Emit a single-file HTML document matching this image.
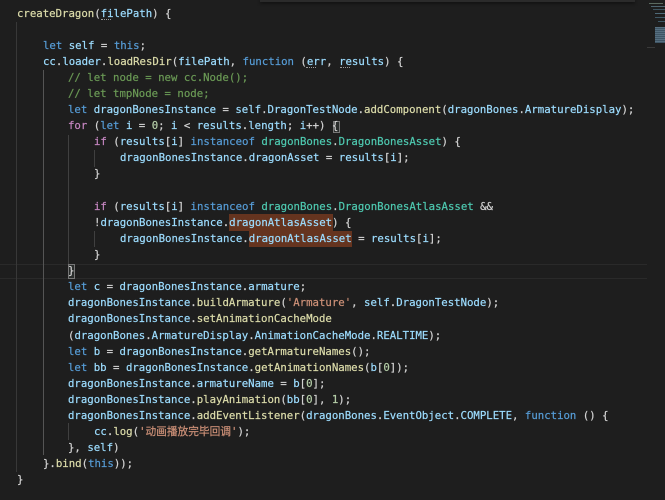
<!DOCTYPE html>
<html><head><meta charset="utf-8">
<style>
html,body{margin:0;padding:0;background:#1e1e1e;width:665px;height:500px;overflow:hidden}
#e{position:absolute;left:0;top:0;width:665px;height:500px;overflow:hidden;background:#1e1e1e;filter:blur(0.25px)}
#t{position:absolute;left:0;top:1px;width:665px;height:499px}
.l{position:absolute;white-space:pre;font-family:"DejaVu Sans Mono","Noto Sans CJK SC",monospace;font-size:10.7px;line-height:16px;height:16px;color:#d4d4d4;letter-spacing:0;-webkit-text-stroke:0.2px currentColor}
.b{position:absolute}
.k{color:#569cd6}.v{color:#9cdcfe}.f{color:#dcdcaa}.c{color:#6a9955}.p{color:#c586c0}.t{color:#4ec9b0}.s{color:#ce9178}.n{color:#b5cea8}
.g{position:absolute;width:1px;background:#404040}
.m{position:absolute;height:1px}
.d{position:absolute;width:10px;height:1px;border-bottom:1px dotted #9a9a9a;box-sizing:border-box}
</style></head><body>
<div id="e">
<div class="b" style="left:0;top:264px;width:647px;height:1px;background:#2a2a2a"></div>
<div class="b" style="left:0;top:278px;width:647px;height:1px;background:#2a2a2a"></div>

<div class="g" style="left:16px;top:22px;height:450px;background:#383838"></div>
<div class="g" style="left:43px;top:70px;height:385px;background:#555"></div>
<div class="g" style="left:68px;top:135px;height:130px"></div>
<div class="g" style="left:68px;top:423px;height:17px"></div>
<div class="g" style="left:94px;top:150px;height:17px"></div>
<div class="g" style="left:94px;top:231px;height:16px"></div>

<div class="b" style="left:229px;top:214px;width:104px;height:17px;background:#65341f"></div>
<div class="b" style="left:249px;top:231px;width:103px;height:16px;background:#65341f"></div>
<div class="b" style="left:333px;top:121px;width:7px;height:12px;border:1px solid #777;box-sizing:border-box;background:#2a2d2c"></div>
<div class="b" style="left:68px;top:264px;width:7px;height:15px;border:1px solid #777;box-sizing:border-box;background:#2a2d2c"></div>

<div id="t">
<div class="l" style="left:17px;top:5px"><span class="f">createDragon</span>(<span class="v">filePath</span>) {</div>
<div class="l" style="left:43px;top:37px"><span class="k">let</span> <span class="v">self</span> = <span class="k">this</span>;</div>
<div class="l" style="left:43px;top:53px"><span class="v">cc</span>.<span class="v">loader</span>.<span class="f">loadResDir</span>(<span class="v">filePath</span>, <span class="k">function</span> (<span class="v">err</span>, <span class="v">results</span>) {</div>
<div class="l" style="left:68px;top:69px"><span class="c">// let node = new cc.Node();</span></div>
<div class="l" style="left:68px;top:85px"><span class="c">// let tmpNode = node;</span></div>
<div class="l" style="left:68px;top:101px"><span class="k">let</span> <span class="v">dragonBonesInstance</span> = <span class="v">self</span>.<span class="v">DragonTestNode</span>.<span class="f">addComponent</span>(<span class="v">dragonBones</span>.<span class="v">ArmatureDisplay</span>);</div>
<div class="l" style="left:68px;top:117px"><span class="p">for</span> (<span class="k">let</span> <span class="v">i</span> = <span class="n">0</span>; <span class="v">i</span> &lt; <span class="v">results</span>.<span class="v">length</span>; <span class="v">i</span>++) {</div>
<div class="l" style="left:94px;top:133px"><span class="p">if</span> (<span class="v">results</span>[<span class="v">i</span>] <span class="k">instanceof</span> <span class="t">dragonBones</span>.<span class="t">DragonBonesAsset</span>) {</div>
<div class="l" style="left:120px;top:149px"><span class="v">dragonBonesInstance</span>.<span class="v">dragonAsset</span> = <span class="v">results</span>[<span class="v">i</span>];</div>
<div class="l" style="left:94px;top:165px">}</div>
<div class="l" style="left:94px;top:198px"><span class="p">if</span> (<span class="v">results</span>[<span class="v">i</span>] <span class="k">instanceof</span> <span class="t">dragonBones</span>.<span class="t">DragonBonesAtlasAsset</span> &amp;&amp;</div>
<div class="l" style="left:94px;top:214px">!<span class="v">dragonBonesInstance</span>.<span class="v">dragonAtlasAsset</span>) {</div>
<div class="l" style="left:120px;top:230px"><span class="v">dragonBonesInstance</span>.<span class="v">dragonAtlasAsset</span> = <span class="v">results</span>[<span class="v">i</span>];</div>
<div class="l" style="left:94px;top:246px">}</div>
<div class="l" style="left:68px;top:262px">}</div>
<div class="l" style="left:68px;top:278px"><span class="k">let</span> <span class="v">c</span> = <span class="v">dragonBonesInstance</span>.<span class="v">armature</span>;</div>
<div class="l" style="left:68px;top:294px"><span class="v">dragonBonesInstance</span>.<span class="f">buildArmature</span>(<span class="s">'Armature'</span>, <span class="v">self</span>.<span class="v">DragonTestNode</span>);</div>
<div class="l" style="left:68px;top:310px"><span class="v">dragonBonesInstance</span>.<span class="f">setAnimationCacheMode</span></div>
<div class="l" style="left:68px;top:327px">(<span class="v">dragonBones</span>.<span class="v">ArmatureDisplay</span>.<span class="v">AnimationCacheMode</span>.<span class="v">REALTIME</span>);</div>
<div class="l" style="left:68px;top:343px"><span class="k">let</span> <span class="v">b</span> = <span class="v">dragonBonesInstance</span>.<span class="f">getArmatureNames</span>();</div>
<div class="l" style="left:68px;top:359px"><span class="k">let</span> <span class="v">bb</span> = <span class="v">dragonBonesInstance</span>.<span class="f">getAnimationNames</span>(<span class="v">b</span>[<span class="n">0</span>]);</div>
<div class="l" style="left:68px;top:375px"><span class="v">dragonBonesInstance</span>.<span class="v">armatureName</span> = <span class="v">b</span>[<span class="n">0</span>];</div>
<div class="l" style="left:68px;top:391px"><span class="v">dragonBonesInstance</span>.<span class="f">playAnimation</span>(<span class="v">bb</span>[<span class="n">0</span>], <span class="n">1</span>);</div>
<div class="l" style="left:68px;top:407px"><span class="v">dragonBonesInstance</span>.<span class="f">addEventListener</span>(<span class="v">dragonBones</span>.<span class="v">EventObject</span>.<span class="v">COMPLETE</span>, <span class="k">function</span> () {</div>
<div class="l" style="left:94px;top:423px"><span class="v">cc</span>.<span class="f">log</span>(<span class="s">'动画播放完毕回调'</span>);</div>
<div class="l" style="left:68px;top:439px">}, <span class="v">self</span>)</div>
<div class="l" style="left:43px;top:455px">}.<span class="f">bind</span>(<span class="k">this</span>));</div>
<div class="l" style="left:17px;top:471px">}</div>
</div>

<div class="d" style="left:101px;top:19px"></div>
<div class="d" style="left:306px;top:67px"></div>
<div class="d" style="left:340px;top:67px"></div>

<div class="b" style="left:260px;top:0;width:375px;height:2px;background:#2b2b2b;box-shadow:0 1px 3px #0a0a0a"></div>

<div class="m" style="left:649px;top:3px;width:14px;background:#5b6a60"></div>
<div class="m" style="left:651px;top:6px;width:14px;background:#4f6570"></div>
<div class="m" style="left:653px;top:9px;width:12px;background:#3f5560"></div>
<div class="m" style="left:655px;top:13px;width:10px;background:#4f6a78"></div>
<div class="m" style="left:655px;top:17px;width:10px;background:#3f5866"></div>
<div class="m" style="left:658px;top:21px;width:7px;background:#3f5866"></div>
<div class="b" style="left:655px;top:27px;width:10px;height:16px;background:repeating-linear-gradient(180deg,#566f80 0 1px,#3f5565 1px 2px)"></div>
<div class="m" style="left:647px;top:47px;width:8px;background:#3a3a3a"></div>
</div>
</body></html>
